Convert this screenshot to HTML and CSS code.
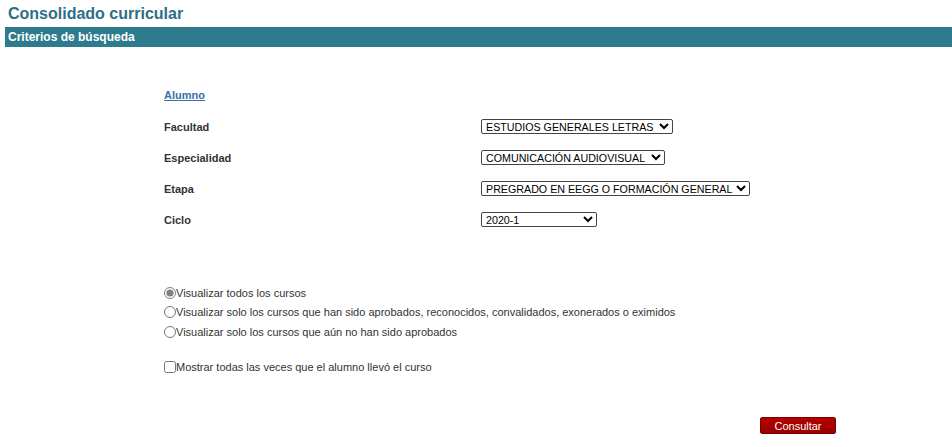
FILE: index.html
```html
<!DOCTYPE html>
<html lang="es">
<head>
    <meta charset="UTF-8">
    <title>Consolidado curricular</title>
    <link rel="stylesheet" href="styles.css">
</head>
<body>
    <h1 class="page-title">Consolidado curricular</h1>
    <div class="section-bar">Criterios de búsqueda</div>

    <form class="search-form">
        <div class="field-row">
            <a href="#" class="student-link">Alumno</a>
        </div>
        <div class="field-row">
            <label class="field-label">Facultad</label>
            <select class="field-select faculty-select">
                <option>ESTUDIOS GENERALES LETRAS</option>
            </select>
        </div>
        <div class="field-row">
            <label class="field-label">Especialidad</label>
            <select class="field-select specialty-select">
                <option>COMUNICACIÓN AUDIOVISUAL</option>
            </select>
        </div>
        <div class="field-row">
            <label class="field-label">Etapa</label>
            <select class="field-select stage-select">
                <option>PREGRADO EN EEGG O FORMACIÓN GENERAL</option>
            </select>
        </div>
        <div class="field-row">
            <label class="field-label">Ciclo</label>
            <select class="field-select cycle-select">
                <option>2020-1</option>
            </select>
        </div>

        <div class="options">
            <label class="option"><input type="radio" name="view" checked>Visualizar todos los cursos</label>
            <label class="option"><input type="radio" name="view">Visualizar solo los cursos que han sido aprobados, reconocidos, convalidados, exonerados o eximidos</label>
            <label class="option"><input type="radio" name="view">Visualizar solo los cursos que aún no han sido aprobados</label>
        </div>

        <label class="option repeat-option"><input type="checkbox">Mostrar todas las veces que el alumno llevó el curso</label>

        <div class="actions">
            <button type="button" class="submit-btn">Consultar</button>
        </div>
    </form>
</body>
</html>
```

FILE: styles.css
```css
* {
    box-sizing: border-box;
}

body {
    margin: 0;
    padding: 0 0 0 5px;
    font-family: "Liberation Sans", Arial, sans-serif;
    color: #333;
    background: #fff;
}

.page-title {
    margin: 0;
    padding: 5px 0 0 3px;
    height: 27px;
    font-size: 16px;
    font-weight: bold;
    color: #2c6f86;
}

.section-bar {
    height: 20px;
    line-height: 20px;
    padding-left: 3px;
    background-color: #2e7b8d;
    color: #fff;
    font-size: 12px;
    font-weight: bold;
}

.search-form {
    padding: 32px 0 0 159px;
    width: 831px;
    font-size: 11px;
}

.field-row {
    display: grid;
    grid-template-columns: 317px auto;
    align-items: center;
    height: 31px;
}

.field-row:first-child {
    height: 32px;
}

.student-link {
    color: #3a6ea5;
    font-weight: bold;
    font-size: 11px;
    text-decoration: underline;
}

.field-label {
    font-weight: bold;
    font-size: 11px;
    color: #333;
}

.field-select {
    justify-self: start;
    height: 15px;
    padding: 0;
    font-family: "Liberation Sans", Arial, sans-serif;
    font-size: 10.7px;
    color: #000;
    background: #fff;
    border: 1px solid #444;
    border-radius: 2px;
}

.faculty-select {
    width: 192px;
}

.specialty-select {
    width: 184px;
}

.stage-select {
    width: 269px;
}

.cycle-select {
    width: 116px;
}

.options {
    margin-top: 51px;
    display: flex;
    flex-direction: column;
    gap: 6.5px;
}

.option {
    display: flex;
    align-items: center;
    height: 13px;
    font-size: 11px;
    color: #333;
}

.option input {
    margin: 0;
    width: 12px;
    height: 12px;
    accent-color: #808080;
}

.repeat-option {
    margin-top: 22px;
}

.actions {
    display: flex;
    justify-content: flex-end;
    margin-top: 44px;
}

.submit-btn {
    width: 76px;
    height: 17px;
    padding: 0;
    border: 1px solid #7d0000;
    border-radius: 2px;
    background: linear-gradient(#b50000, #980000);
    color: #fff;
    font-family: "Liberation Sans", Arial, sans-serif;
    font-size: 11px;
}
```
